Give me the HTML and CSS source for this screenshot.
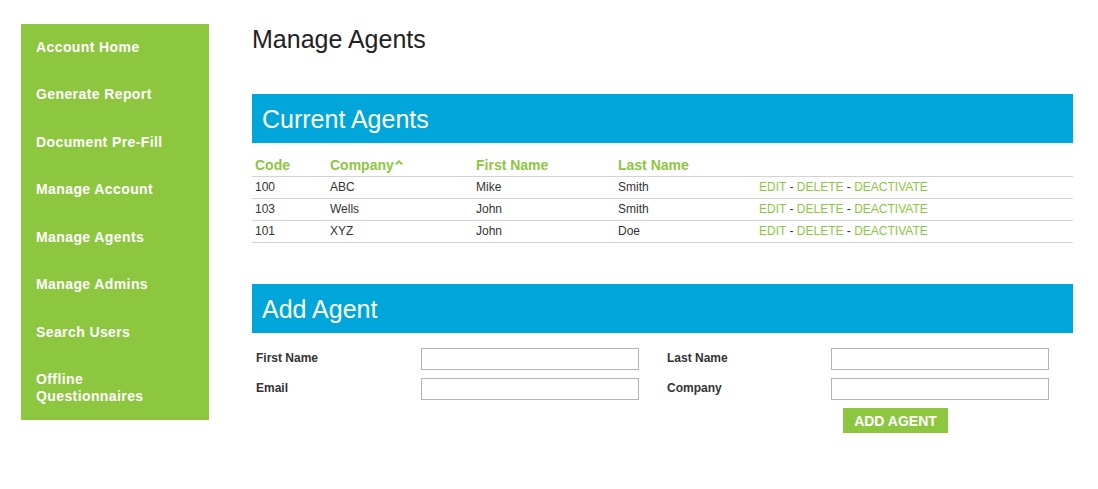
FILE: index.html
```html
<!DOCTYPE html>
<html lang="en">
<head>
  <meta charset="UTF-8">
  <meta name="viewport" content="width=device-width, initial-scale=1.0">
  <title>Manage Agents</title>
  <link rel="stylesheet" href="styles.css">
</head>
<body>
  <div class="page">
    <nav class="sidebar">
      <a href="#">Account Home</a>
      <a href="#">Generate Report</a>
      <a href="#">Document Pre-Fill</a>
      <a href="#">Manage Account</a>
      <a href="#">Manage Agents</a>
      <a href="#">Manage Admins</a>
      <a href="#">Search Users</a>
      <a href="#">Offline<br>Questionnaires</a>
    </nav>

    <main class="content">
      <h1>Manage Agents</h1>

      <section class="panel">
        <h2 class="panel-title">Current Agents</h2>
        <table class="agents">
          <thead>
            <tr>
              <th class="col-code">Code</th>
              <th class="col-company">Company<svg class="caret" width="8" height="5" viewBox="0 0 8 5"><path d="M0.8 4.4 L4 1.3 L7.2 4.4" fill="none" stroke="#8dc63f" stroke-width="1.8"/></svg></th>
              <th class="col-first">First Name</th>
              <th class="col-last">Last Name</th>
              <th></th>
            </tr>
          </thead>
          <tbody>
            <tr>
              <td>100</td>
              <td>ABC</td>
              <td>Mike</td>
              <td>Smith</td>
              <td><a href="#">EDIT</a> - <a href="#">DELETE</a> - <a href="#">DEACTIVATE</a></td>
            </tr>
            <tr>
              <td>103</td>
              <td>Wells</td>
              <td>John</td>
              <td>Smith</td>
              <td><a href="#">EDIT</a> - <a href="#">DELETE</a> - <a href="#">DEACTIVATE</a></td>
            </tr>
            <tr>
              <td>101</td>
              <td>XYZ</td>
              <td>John</td>
              <td>Doe</td>
              <td><a href="#">EDIT</a> - <a href="#">DELETE</a> - <a href="#">DEACTIVATE</a></td>
            </tr>
          </tbody>
        </table>
      </section>

      <section class="panel add-panel">
        <h2 class="panel-title">Add Agent</h2>
        <form class="agent-form">
          <label for="first">First Name</label>
          <input id="first" type="text">
          <label for="last" class="right-label">Last Name</label>
          <input id="last" type="text">

          <label for="email">Email</label>
          <input id="email" type="text">
          <label for="company" class="right-label">Company</label>
          <input id="company" type="text">

          <button type="button" class="btn-add">ADD AGENT</button>
        </form>
      </section>
    </main>
  </div>
</body>
</html>
```

FILE: styles.css
```css
body {
  font-family: "Liberation Sans", Arial, sans-serif;
  margin: 0;
  padding: 0;
  background-color: #fff;
  color: #333;
}

.page {
  display: flex;
  align-items: flex-start;
  padding: 24px 0 0 21px;
}

/* left menu */
.sidebar {
  width: 188px;
  background-color: #8dc63f;
  display: flex;
  flex-direction: column;
  gap: 1.5px;
}

.sidebar a {
  display: block;
  padding: 14.5px 15px;
  color: #fff;
  font-size: 14px;
  font-weight: bold;
  line-height: 17px;
  letter-spacing: 0.4px;
  text-decoration: none;
}

.content {
  width: 821px;
  margin-left: 43px;
  padding-top: 1px;
}

h1 {
  margin: 0;
  font-size: 25px;
  font-weight: normal;
  line-height: 28px;
  color: #222;
}

.panel {
  margin-top: 41px;
}

.panel-title {
  margin: 0;
  padding: 11px 10px 10px;
  background-color: #00a6da;
  color: #fff;
  font-size: 25px;
  font-weight: normal;
  line-height: 28px;
}

/* agents table */
.agents {
  width: 100%;
  margin-top: 11px;
  border-collapse: collapse;
}

.agents th,
.agents td {
  text-align: left;
  padding: 3px;
  border-bottom: 1px solid #d3d3d3;
}

.agents th {
  color: #8dc63f;
  font-size: 14px;
  line-height: 16px;
}

.agents td {
  font-size: 12px;
  line-height: 15px;
}

.agents .col-code { width: 69px; }
.agents .col-company { width: 140px; }
.agents .col-first { width: 136px; }
.agents .col-last { width: 135px; }

.caret {
  margin-left: 1px;
  vertical-align: 5px;
}

.agents a {
  color: #8dc63f;
  text-decoration: none;
}

/* add agent form */
.agent-form {
  display: grid;
  grid-template-columns: 165px 246px 164px 218px;
  row-gap: 8px;
  margin-top: 15px;
  padding-left: 4px;
}

.agent-form label {
  font-size: 12px;
  font-weight: bold;
  line-height: 14px;
  padding-top: 3px;
}

.agent-form input {
  width: 218px;
  height: 22px;
  box-sizing: border-box;
  border: 1px solid #b4b4b4;
  margin: 0;
  font-family: inherit;
}

.btn-add {
  grid-column: 4;
  justify-self: start;
  margin-left: 12px;
  width: 105px;
  height: 25px;
  padding: 0;
  border: none;
  background-color: #8dc63f;
  color: #fff;
  font-family: inherit;
  font-size: 14px;
  font-weight: bold;
}
```
